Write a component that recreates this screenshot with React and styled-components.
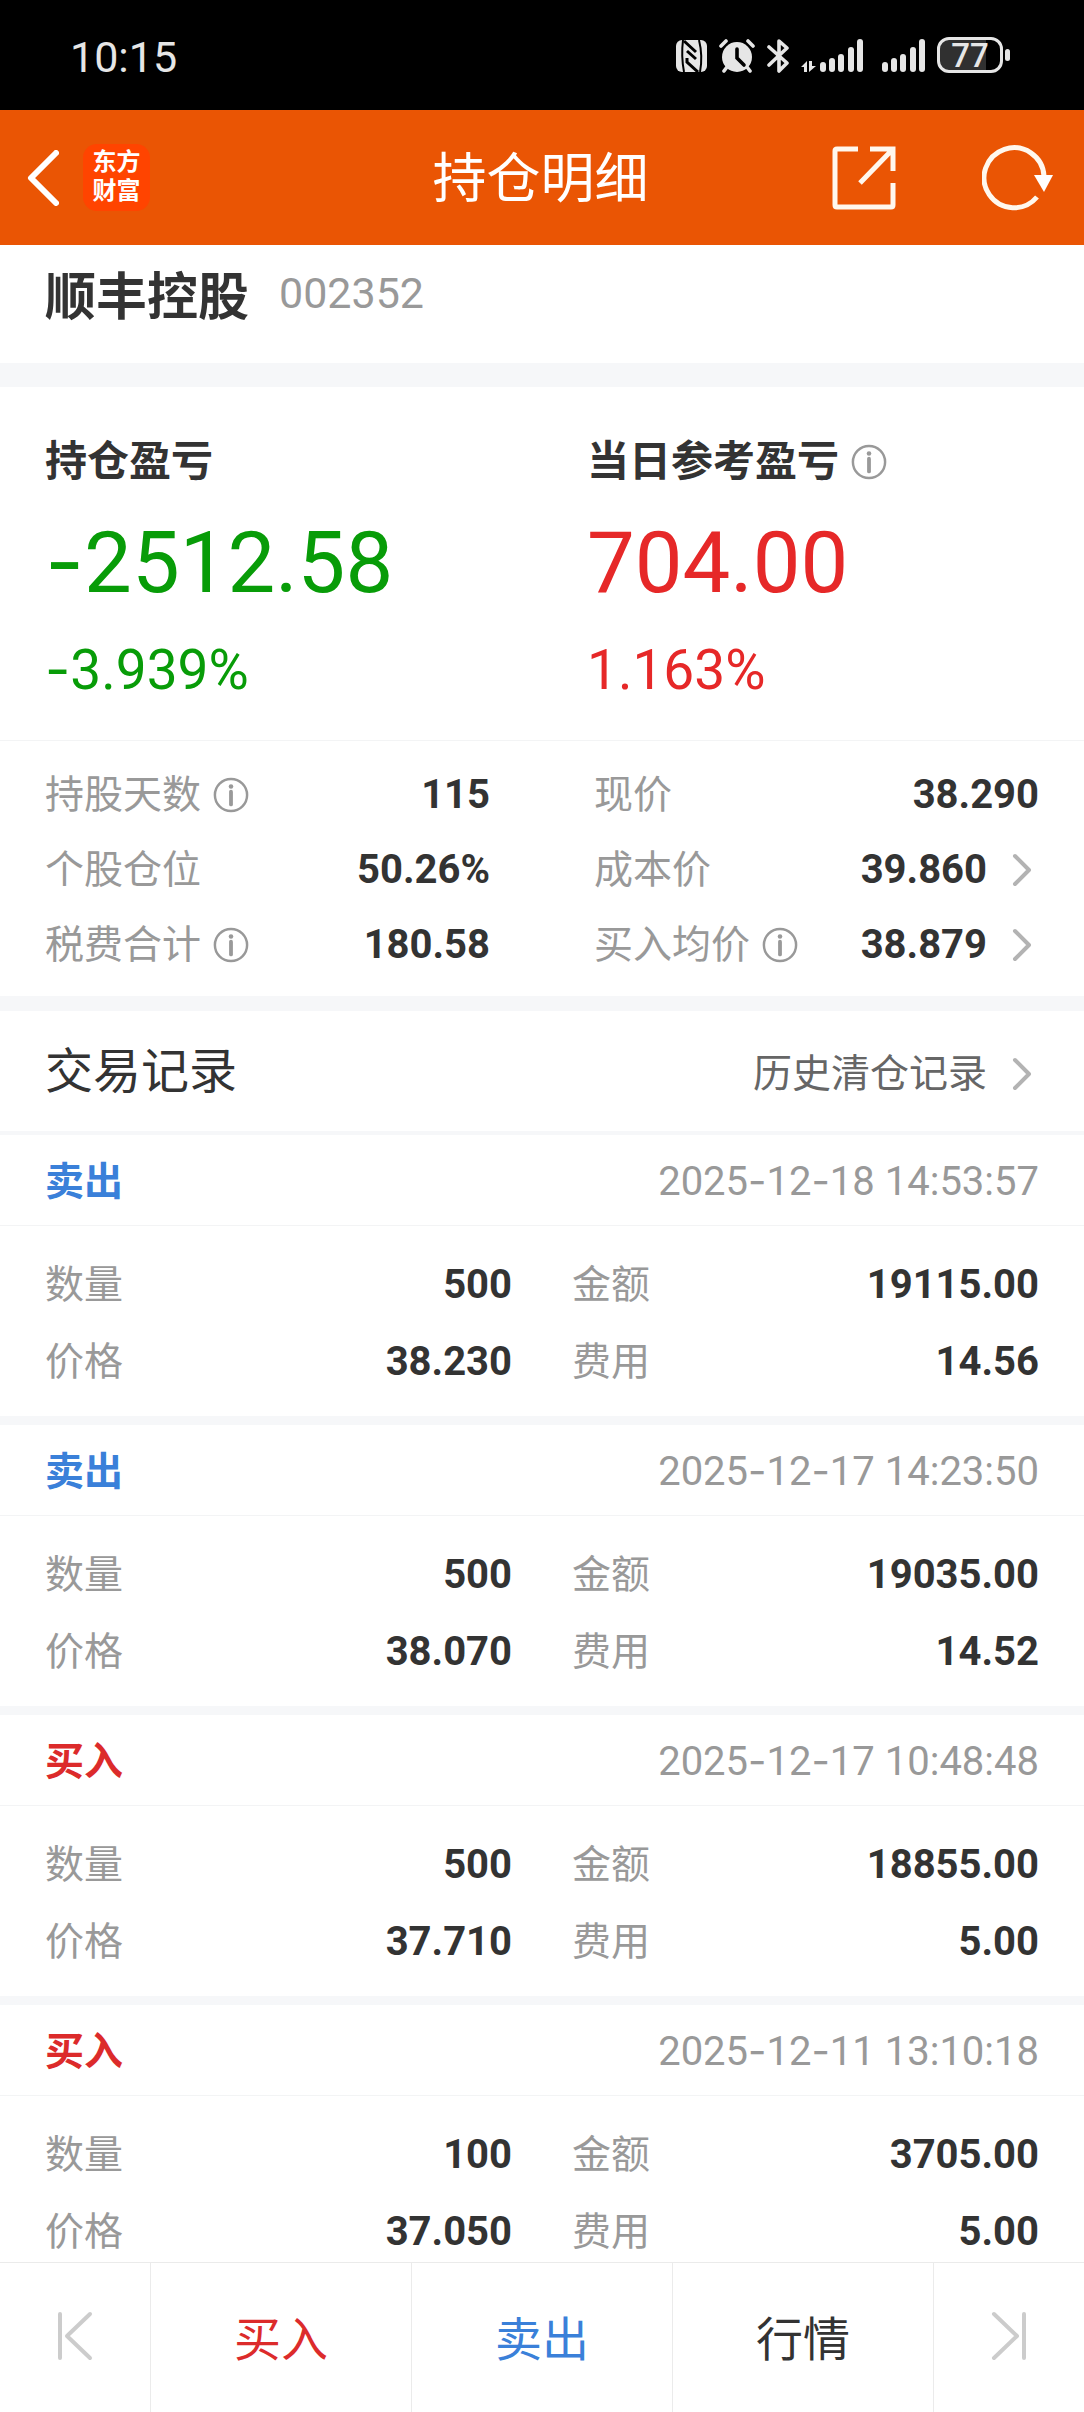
import React from 'react';
import styled, { createGlobalStyle } from "styled-components";

const profits = [
  { title: '持仓盈亏', amount: '-2512.58', percent: '-3.939%', color: '#089c08' },
  { title: '当日参考盈亏', amount: '704.00', percent: '1.163%', color: '#e62828', info: true },
];

const stats = [
  { label: '持股天数', value: '115', info: true },
  { label: '现价', value: '38.290' },
  { label: '个股仓位', value: '50.26%' },
  { label: '成本价', value: '39.860', link: true },
  { label: '税费合计', value: '180.58', info: true },
  { label: '买入均价', value: '38.879', info: true, link: true },
];

const records = [
  { type: 'sell', time: '2025-12-18 14:53:57', count: '500', amount: '19115.00', price: '38.230', fee: '14.56' },
  { type: 'sell', time: '2025-12-17 14:23:50', count: '500', amount: '19035.00', price: '38.070', fee: '14.52' },
  { type: 'buy', time: '2025-12-17 10:48:48', count: '500', amount: '18855.00', price: '37.710', fee: '5.00' },
  { type: 'buy', time: '2025-12-11 13:10:18', count: '100', amount: '3705.00', price: '37.050', fee: '5.00' },
];

const sides = {
  buy: { text: '买入', color: '#dc2b2b' },
  sell: { text: '卖出', color: '#3a80d9' },
};

const App = () => {
  return (
    <Page>
      <GlobalStyle />
      <StatusBar />
      <Header />
      <Content>
        <StockRow>
          <StockName>顺丰控股</StockName>
          <StockCode>002352</StockCode>
        </StockRow>
        <Band size={24} />
        <ProfitRow>
          {profits.map(item => <Profit key={item.title} {...item} />)}
        </ProfitRow>
        <StatGrid>
          {stats.map(item => <Stat key={item.label} {...item} />)}
        </StatGrid>
        <Band size={15} />
        <RecordsHeader>
          <RecordsTitle>交易记录</RecordsTitle>
          <HistoryButton>
            历史清仓记录
            <Chevron />
          </HistoryButton>
        </RecordsHeader>
        <Band size={4} />
        {records.map(item => <Record key={item.time} {...item} />)}
      </Content>
      <BottomBar />
    </Page>
  );
};

const StatusBar = () => (
  <StatusWrapper>
    <Clock>10:15</Clock>
    <StatusIcons>
      <NfcIcon />
      <AlarmIcon />
      <BluetoothIcon />
      <SignalIcon data />
      <SignalIcon />
      <Battery>
        <BatteryBody>77</BatteryBody>
        <BatteryTip />
      </Battery>
    </StatusIcons>
  </StatusWrapper>
);

const Header = () => (
  <HeaderWrapper>
    <HeaderSide>
      <IconButton aria-label="返回">
        <svg width="32" height="56" viewBox="0 0 32 56" fill="none" stroke="#fff" strokeWidth="6" strokeLinecap="round" strokeLinejoin="round">
          <path d="M29 3 4 28l25 25" />
        </svg>
      </IconButton>
      <Logo>东方<br />财富</Logo>
    </HeaderSide>
    <HeaderTitle>持仓明细</HeaderTitle>
    <HeaderSide end>
      <IconButton aria-label="分享">
        <svg width="64" height="64" viewBox="0 0 64 64" fill="none" stroke="#fff8ee" strokeWidth="5">
          <path d="M26 3H5Q3 3 3 5V59Q3 61 5 61H59Q61 61 61 59V37" />
          <path d="M38 3H61V25M60 4 28 37" />
        </svg>
      </IconButton>
      <IconButton aria-label="刷新">
        <svg width="72" height="66" viewBox="0 0 72 66" fill="none" stroke="#fff8ee" strokeWidth="5">
          <path d="M62 31A30 30 0 1 0 55 52" />
          <path d="M52 30H71L62 47Z" fill="#fff" stroke="none" />
        </svg>
      </IconButton>
    </HeaderSide>
  </HeaderWrapper>
);

// Roboto's hyphen is too short for figures, so it is set in a wider face
const Figures = ({ children }) => (
  children.split(/(-)/).map((part, i) => part === '-' ? <Hyphen key={i}>-</Hyphen> : part)
);

const Profit = ({ title, amount, percent, color, info }) => (
  <ProfitCell color={color}>
    <ProfitTitle>
      {title}
      {info && <Info label={title} />}
    </ProfitTitle>
    <Amount><Figures>{amount}</Figures></Amount>
    <Percent><Figures>{percent}</Figures></Percent>
  </ProfitCell>
);

const Stat = ({ label, value, info, link }) => (
  <Row height={75}>
    <Label>
      {label}
      {info && <Info label={label} />}
    </Label>
    <Value>
      {value}
      {link && <IconButton aria-label={label}><Chevron /></IconButton>}
    </Value>
  </Row>
);

const Record = ({ type, time, count, amount, price, fee }) => (
  <RecordCard>
    <RecordHead>
      <Side color={sides[type].color}>{sides[type].text}</Side>
      <Time><Figures>{time}</Figures></Time>
    </RecordHead>
    <RecordBody>
      <Row height={77}><Label>数量</Label><Value>{count}</Value></Row>
      <Row height={77}><Label>金额</Label><Value>{amount}</Value></Row>
      <Row height={77}><Label>价格</Label><Value>{price}</Value></Row>
      <Row height={77}><Label>费用</Label><Value>{fee}</Value></Row>
    </RecordBody>
  </RecordCard>
);

const BottomBar = () => (
  <BottomWrapper>
    <BottomButton aria-label="上一个">
      <svg width="36" height="50" viewBox="0 0 36 50" fill="none" stroke="#ccc" strokeWidth="4" strokeLinecap="round" strokeLinejoin="round">
        <path d="M3 3V47M33 3 10 25 33 47" />
      </svg>
    </BottomButton>
    <BottomButton color={sides.buy.color}>买入</BottomButton>
    <BottomButton color={sides.sell.color}>卖出</BottomButton>
    <BottomButton>行情</BottomButton>
    <BottomButton aria-label="下一个">
      <svg width="36" height="50" viewBox="0 0 36 50" fill="none" stroke="#ccc" strokeWidth="4" strokeLinecap="round" strokeLinejoin="round">
        <path d="M33 3V47M3 3 26 25 3 47" />
      </svg>
    </BottomButton>
  </BottomWrapper>
);

//icons

const Chevron = () => (
  <ChevronSvg width="22" height="34" viewBox="0 0 22 34" fill="none" stroke="#b3b3b3" strokeWidth="4" strokeLinecap="round" strokeLinejoin="round">
    <path d="M4 3 18 17 4 31" />
  </ChevronSvg>
);

const Info = ({ label }) => (
  <IconButton aria-label={`${label}说明`}>
    <svg width="36" height="36" viewBox="0 0 38 38">
      <circle cx="19" cy="19" r="17" fill="none" stroke="#999" strokeWidth="2.6" />
      <circle cx="19" cy="10" r="2.4" fill="#999" />
      <path d="M19 15.500V29" stroke="#999" strokeWidth="4" strokeLinecap="round" />
    </svg>
  </IconButton>
);

const NfcIcon = () => (
  <svg width="31" height="36" viewBox="0 0 31 36" fill="none" stroke="#000">
    <rect x="0" y="3" width="31" height="32" rx="6" fill="#e6e6e6" stroke="none" />
    <path d="M7 3Q5 19 8 35M23 3Q27 19 24 35" strokeWidth="2" />
    <path d="M8 4 20 15M11 14 20 22" strokeWidth="3" />
    <path d="M11 21V25L22 35" strokeWidth="3" />
  </svg>
);

const AlarmIcon = () => (
  <svg width="36" height="36" viewBox="0 0 36 36" stroke="#e6e6e6" strokeWidth="3.600" strokeLinecap="round" fill="none">
    <circle cx="18" cy="20" r="15" fill="#e6e6e6" stroke="none" />
    <path d="M2 9 7 4M34 9 29 4M8 30 5 34M28 30 31 34" />
    <path d="M18 12V21L25 28" stroke="#000" />
  </svg>
);

const BluetoothIcon = () => (
  <svg width="22" height="36" viewBox="0 0 22 36" stroke="#e6e6e6" strokeWidth="3.600" strokeLinecap="round" strokeLinejoin="round" fill="none">
    <path d="M2 10 20 26 12 34V4L20 11 2 28" />
  </svg>
);

const bars = [[0, 25], [9, 21], [18, 17], [28, 10], [37, 2]];

const SignalIcon = ({ data }) => (
  <svg width={data ? 62 : 43} height="36" viewBox={data ? '-19 0 62 36' : '0 0 43 36'} fill="#e6e6e6">
    {bars.map(([x, y]) => <rect key={x} x={x} y={y} width="6" height={35 - y} rx="3" />)}
    {data && <path d="M-19 30 -13 24V35H-16V30ZM-11 24H-8V29H-4L-11 35Z" />}
  </svg>
);

export default App;

//styled

const GlobalStyle = createGlobalStyle`
  * {
    box-sizing: border-box;
  }
  body {
    margin: 0;
    background: #fff;
    color: #333;
    font-family: Roboto, "Noto Sans CJK SC", sans-serif;
  }
  button {
    margin: 0;
    padding: 0;
    border: 0;
    background: none;
    color: inherit;
    font: inherit;
    cursor: pointer;
  }
  h1, h2, h3, dl, dt, dd, p {
    margin: 0;
    font-weight: 400;
  }
`;

const Page = styled.div`
  display: flex;
  flex-direction: column;
  height: 100vh;
  background: #fff;
`;

const StatusWrapper = styled.div`
  flex: none;
  display: flex;
  align-items: center;
  justify-content: space-between;
  height: 110px;
  padding: 0 74px 0 70px;
  background: #000;
  color: #e6e6e6;
`;

const Clock = styled.time`
  font-size: 43px;
  line-height: 60px;
  padding-top: 4px;
`;

const StatusIcons = styled.div`
  display: flex;
  align-items: center;
  gap: 12px;

  svg {
    display: block;
  }
  svg:nth-child(5) {
    margin-left: 7px;
  }
`;

const Battery = styled.div`
  display: flex;
  align-items: center;
  gap: 2px;
`;

const BatteryBody = styled.div`
  width: 66px;
  height: 36px;
  border: 3px solid #e6e6e6;
  border-radius: 12px;
  background: linear-gradient(to right, #303030 77%, #000 77%);
  font-size: 33px;
  font-weight: 500;
  line-height: 32px;
  text-align: center;
`;

const BatteryTip = styled.div`
  width: 5px;
  height: 12px;
  border-radius: 3px;
  background: #e6e6e6;
`;

const HeaderWrapper = styled.header`
  flex: none;
  display: grid;
  grid-template-columns: 1fr auto 1fr;
  align-items: center;
  height: 135px;
  padding: 0 30px 0 27px;
  background: #ea5504;
  color: #fff;
`;

const HeaderSide = styled.div.withConfig({ shouldForwardProp: prop => prop !== 'end' })`
  display: flex;
  align-items: center;
  justify-content: ${({ end }) => end ? 'flex-end' : 'flex-start'};
  gap: ${({ end }) => end ? '86px' : '24px'};
`;

const HeaderTitle = styled.h1`
  padding-top: 5px;
  font-size: 54px;
  line-height: 80px;
`;

const Logo = styled.div`
  width: 67px;
  height: 67px;
  padding-top: 4px;
  border-radius: 14px;
  background: #ff4400;
  font-size: 24px;
  font-weight: 700;
  line-height: 29px;
  text-align: center;
`;

const IconButton = styled.button`
  display: flex;
  align-items: center;
  flex: none;
`;

const Content = styled.main`
  flex: 1;
  min-height: 0;
  overflow-y: auto;
  scrollbar-width: none;
`;

const Band = styled.div.withConfig({ shouldForwardProp: prop => prop !== 'size' })`
  height: ${({ size }) => size}px;
  background: #f6f7f9;
`;

const StockRow = styled.div`
  display: flex;
  align-items: center;
  gap: 30px;
  height: 118px;
  padding: 0 45px 23px;
`;

const StockName = styled.h2`
  font-size: 51px;
  font-weight: 700;
`;

const StockCode = styled.span`
  color: #999;
  font-size: 43px;
`;

const Hyphen = styled.span`
  font-family: Inter, sans-serif;
  line-height: 1;
`;

const ProfitRow = styled.section`
  display: grid;
  grid-template-columns: 1fr 1fr;
  padding: 45px 0 40px;
  border-bottom: 1px solid #f3f4f5;
`;

const ProfitCell = styled.div`
  padding-left: 45px;
  color: ${({ color }) => color};
`;

const ProfitTitle = styled.h3`
  display: flex;
  align-items: center;
  gap: 12px;
  color: #333;
  font-size: 42px;
  font-weight: 700;
  line-height: 60px;
`;

const Amount = styled.p`
  margin-top: 21px;
  font-size: 85px;
  line-height: 100px;
`;

const Percent = styled.p`
  margin-top: 27px;
  font-size: 55px;
  line-height: 60px;
`;

const StatGrid = styled.dl`
  display: grid;
  grid-template-columns: 1fr 1fr;
  column-gap: 104px;
  padding: 16px 45px 14px;
`;

const Row = styled.div.withConfig({ shouldForwardProp: prop => prop !== 'height' })`
  display: flex;
  align-items: center;
  justify-content: space-between;
  height: ${({ height }) => height}px;
`;

const Label = styled.dt`
  display: flex;
  align-items: center;
  gap: 12px;
  color: #999;
  font-size: 39px;
  line-height: 60px;
`;

const Value = styled.dd`
  display: flex;
  align-items: center;
  font-size: 40px;
  font-weight: 700;
  line-height: 60px;
`;

const ChevronSvg = styled.svg`
  margin: 0 6px 0 24px;
`;

const RecordsHeader = styled.div`
  display: flex;
  align-items: center;
  justify-content: space-between;
  height: 120px;
  padding: 2px 45px 0;
`;

const RecordsTitle = styled.h2`
  font-size: 48px;
  line-height: 60px;
`;

const HistoryButton = styled.button`
  display: flex;
  align-items: center;
  padding-top: 4px;
  color: #666;
  font-size: 39px;
  line-height: 60px;
`;

const RecordCard = styled.article`
  border-bottom: 9px solid #f6f7f9;
`;

const RecordHead = styled.div`
  display: flex;
  align-items: center;
  justify-content: space-between;
  height: 91px;
  padding: 3px 45px 0;
  border-bottom: 1px solid #f3f4f5;
`;

const Side = styled.h3`
  color: ${({ color }) => color};
  font-size: 39px;
  font-weight: 700;
  line-height: 60px;
`;

const Time = styled.time`
  color: #999;
  font-size: 40px;
  line-height: 60px;
`;

const RecordBody = styled.dl`
  display: grid;
  grid-template-columns: 1fr 1fr;
  column-gap: 60px;
  padding: 20px 45px 16px;
`;

const BottomWrapper = styled.nav`
  flex: none;
  display: grid;
  grid-template-columns: 150px 1fr 1fr 1fr 151px;
  height: 150px;
  border-top: 1px solid #ebebeb;
  background: #fff;
`;

const BottomButton = styled.button`
  && {
    display: flex;
    align-items: center;
    justify-content: center;
    padding-bottom: 4px;
    color: ${({ color }) => color || '#333'};
    font-size: 47px;
  }
  & + & {
    border-left: 1px solid #ebebeb;
  }
`;
